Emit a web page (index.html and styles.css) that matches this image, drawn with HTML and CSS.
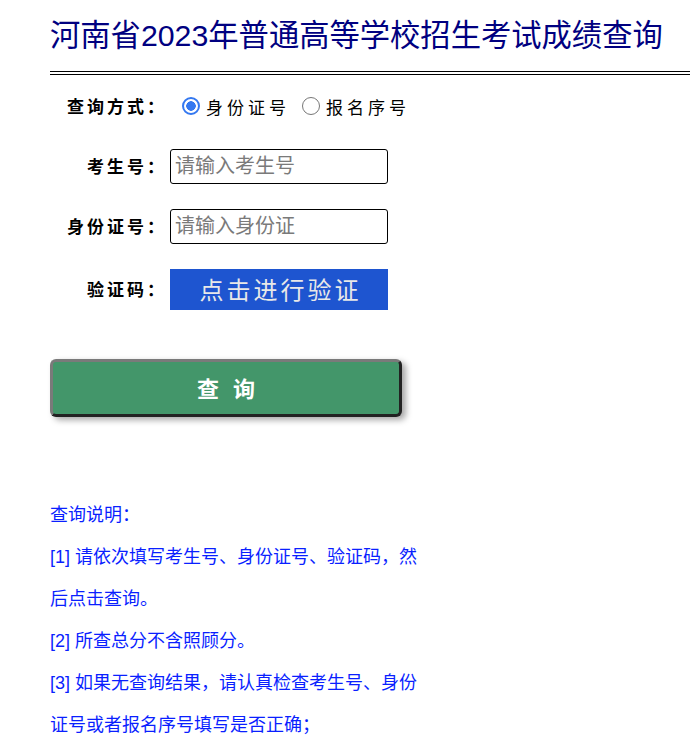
FILE: index.html
```html
<!DOCTYPE html>
<html lang="zh-CN">
<head>
<meta charset="utf-8">
<title>河南省2023年普通高等学校招生考试成绩查询</title>
<link rel="stylesheet" href="styles.css">
</head>
<body>
<div class="page">
  <h1 class="title">河南省2023年普通高等学校招生考试成绩查询</h1>
  <hr class="rule">
  <form class="form">
    <div class="row row-radio">
      <span class="label">查询方式：</span>
      <label class="opt"><input class="radio" type="radio" name="mode" checked><span>身份证号</span></label>
      <label class="opt"><input class="radio" type="radio" name="mode"><span>报名序号</span></label>
    </div>
    <div class="row">
      <span class="label">考生号：</span>
      <input class="field" type="text" placeholder="请输入考生号">
    </div>
    <div class="row">
      <span class="label">身份证号：</span>
      <input class="field" type="text" placeholder="请输入身份证">
    </div>
    <div class="row">
      <span class="label">验证码：</span>
      <button class="verify" type="button">点击进行验证</button>
    </div>
    <button class="submit" type="button">查询</button>
  </form>
  <div class="notes">
    <p>查询说明：</p>
    <p>[1] 请依次填写考生号、身份证号、验证码，然后点击查询。</p>
    <p>[2] 所查总分不含照顾分。</p>
    <p>[3] 如果无查询结果，请认真检查考生号、身份证号或者报名序号填写是否正确；</p>
  </div>
</div>
</body>
</html>
```
FILE: styles.css
```css
html, body {
  margin: 0;
  padding: 0;
  background: #fff;
  overflow-x: hidden;
}
body {
  font-family: "Liberation Sans", "Noto Sans CJK SC", sans-serif;
}
.page {
  padding: 16px 0 0 50px;
}
.title {
  margin: 0;
  font-size: 30.3px;
  font-weight: normal;
  line-height: 40px;
  color: #000080;
  white-space: nowrap;
}
.rule {
  margin: 15px 0 0 0;
  height: 2px;
  border: 0;
  border-top: 1px solid #000;
  border-bottom: 1px solid #000;
  background: transparent;
}
.form {
  display: flex;
  flex-direction: column;
  align-items: flex-start;
  margin-top: 19px;
}
.row {
  display: flex;
  align-items: center;
  margin-bottom: 25px;
}
.row-radio {
  height: 24px;
  margin-bottom: 31px;
}
.label {
  width: 117px;
  text-align: right;
  font-size: 17px;
  font-weight: bold;
  letter-spacing: 3px;
  color: #000;
  margin-right: 3px;
  white-space: nowrap;
  position: relative;
  top: -1px;
}
.opt {
  display: flex;
  align-items: center;
  font-size: 17px;
  letter-spacing: 4px;
  color: #000;
  margin-right: 12px;
}
.radio {
  appearance: none;
  -webkit-appearance: none;
  width: 18px;
  height: 18px;
  margin: 0 6px 0 12px;
  border: 1.5px solid #777;
  border-radius: 50%;
  box-sizing: border-box;
  background: #fff;
}
.opt + .opt .radio {
  margin-left: 0;
}
.radio:checked {
  border: 2px solid #3478f0;
  background: radial-gradient(circle, #3478f0 0 4.5px, #fff 5px);
}
.field {
  width: 218px;
  height: 35px;
  box-sizing: border-box;
  margin: 0;
  border: 1px solid #000;
  border-radius: 3px;
  padding: 0 4px;
  font-family: "Liberation Sans", "Noto Sans CJK SC", sans-serif;
  font-size: 20px;
  color: #000;
  outline: none;
}
.field::placeholder {
  color: #7a7a7a;
}
.verify {
  width: 218px;
  height: 41px;
  margin: 0;
  border: 0;
  padding: 0 0 2px 3px;
  background: #1e55d0;
  color: #e8e8e8;
  font-family: "Liberation Sans", "Noto Sans CJK SC", sans-serif;
  font-size: 24px;
  letter-spacing: 3px;
}
.submit {
  margin-top: 24px;
  width: 352px;
  height: 58px;
  box-sizing: border-box;
  border: 3px solid;
  border-color: #7a7a7a #222 #222 #7a7a7a;
  border-radius: 6px;
  background: #43966a;
  color: #fff;
  font-family: "Liberation Sans", "Noto Sans CJK SC", sans-serif;
  font-size: 22px;
  font-weight: bold;
  letter-spacing: 14px;
  padding: 0 0 3px 14px;
  box-shadow: 4px 3px 6px rgba(0, 0, 0, 0.35);
}
.notes {
  width: 378px;
  margin-top: 77px;
  color: #0a1fff;
  font-size: 18px;
  line-height: 42px;
}
.notes p {
  margin: 0;
}
```
